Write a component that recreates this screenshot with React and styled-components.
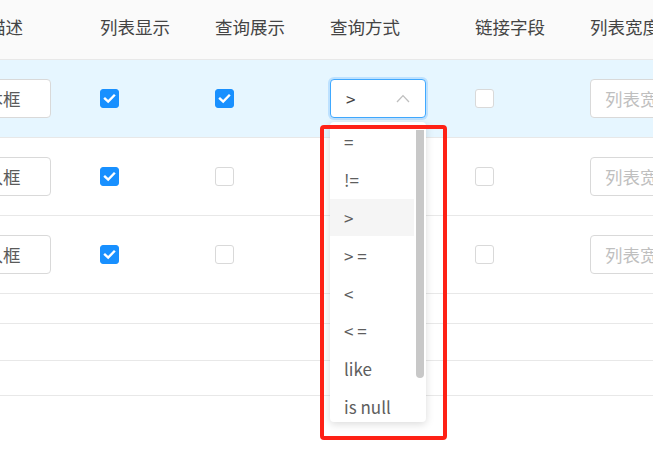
import React from "react";
import styled, { createGlobalStyle } from "styled-components";

const GlobalStyle = createGlobalStyle`
  html, body {
    margin: 0;
    padding: 0;
    background: #fff;
    overflow: hidden;
  }
  * {
    box-sizing: border-box;
  }
`;

const columns = ["字段描述", "列表显示", "查询展示", "查询方式", "链接字段", "列表宽度"];

const rows = [
  { desc: "文本框", list: true, query: true, selected: true, open: true },
  { desc: "输入框", list: true, query: false },
  { desc: "输入框", list: true, query: false },
];

const emptyRows = [30, 37, 35];

const options = ["=", "!=", ">", "> =", "<", "< =", "like", "is null"];

const Check = ({ checked }) => (
  <Box checked={checked}>
    {checked && (
      <svg width="19" height="19" viewBox="0 0 19 19">
        <polyline
          points="5,9.6 8.2,12.6 14,6.6"
          fill="none"
          stroke="#fff"
          strokeWidth="2.4"
          strokeLinecap="square"
        />
      </svg>
    )}
  </Box>
);

const App = () => {
  return (
    <Page>
      <GlobalStyle />
      <Table>
        <HeaderRow>
          {columns.map((c) => (
            <HeadCell key={c}>{c}</HeadCell>
          ))}
        </HeaderRow>
        {rows.map((r, i) => (
          <Row key={i} selected={r.selected} h="78px">
            <Cell>
              <Input>{r.desc}</Input>
            </Cell>
            <Cell>
              <Check checked={r.list} />
            </Cell>
            <Cell>
              <Check checked={r.query} />
            </Cell>
            <Cell>
              {r.open && (
                <SelectWrap>
                  <SelectBox>
                    <span>&gt;</span>
                    <svg width="14" height="9" viewBox="0 0 14 9">
                      <path d="M1 8 L7 1.6 L13 8" fill="none" stroke="#bfbfbf" strokeWidth="1.3" />
                    </svg>
                  </SelectBox>
                  <Dropdown>
                    <OptionList>
                      {options.map((o) => (
                        <Option key={o} active={o === ">"}>
                          {o}
                        </Option>
                      ))}
                    </OptionList>
                    <Track>
                      <Thumb />
                    </Track>
                  </Dropdown>
                </SelectWrap>
              )}
            </Cell>
            <Cell>
              <Check checked={false} />
            </Cell>
            <Cell>
              <Input placeholder>列表宽度</Input>
            </Cell>
          </Row>
        ))}
        {emptyRows.map((h, i) => (
          <Row key={"e" + i} h={h + "px"} />
        ))}
      </Table>
      <Annotation />
    </Page>
  );
};

export default App;

const Page = styled.div`
  position: relative;
  width: 653px;
  height: 450px;
  overflow: hidden;
  font-family: "Noto Sans CJK SC", "Noto Sans", sans-serif;
  font-size: 17.5px;
  color: #606266;
`;

const Table = styled.div`
  margin-left: -47px;
  width: 900px;
`;

const HeaderRow = styled.div`
  display: grid;
  grid-template-columns: 147px 115px 115px 145px 115px 263px;
  align-items: center;
  height: 60px;
  background: #fafafa;
  border-bottom: 1px solid #e8e8e8;
`;

const HeadCell = styled.div`
  color: #444;
  padding-bottom: 6px;
`;

const Row = styled.div`
  display: grid;
  grid-template-columns: 147px 115px 115px 145px 115px 263px;
  align-items: center;
  height: ${({ h }) => h};
  background: ${({ selected }) => (selected ? "#e6f6ff" : "#fff")};
  border-bottom: 1px solid #e8e8e8;
`;

const Cell = styled.div`
  display: flex;
  align-items: center;
`;

const Input = styled.div`
  width: ${({ placeholder }) => (placeholder ? "140px" : "98px")};
  height: 39px;
  display: flex;
  align-items: center;
  padding: 0 14px;
  background: #fff;
  border: 1px solid #d9d9d9;
  border-radius: 4px;
  color: ${({ placeholder }) => (placeholder ? "#bfbfbf" : "#5a5a5a")};
  white-space: nowrap;
`;

const Box = styled.div`
  width: 19px;
  height: 19px;
  border-radius: 3px;
  display: flex;
  background: ${({ checked }) => (checked ? "#1890ff" : "#fff")};
  border: 1px solid ${({ checked }) => (checked ? "#1890ff" : "#d9d9d9")};
  svg {
    margin: -1px;
  }
`;

const SelectWrap = styled.div`
  position: relative;
`;

const SelectBox = styled.div`
  width: 96px;
  height: 39px;
  display: flex;
  align-items: center;
  justify-content: space-between;
  padding: 0 15px 0 15px;
  background: #fff;
  border: 1px solid #40a9ff;
  border-radius: 4px;
  box-shadow: 0 0 0 2px rgba(24, 144, 255, 0.2);
  color: #444;
  font-size: 17px;
  svg {
    margin-top: -1px;
  }
`;

const Dropdown = styled.div`
  position: absolute;
  top: 43px;
  left: 0;
  z-index: 3;
  width: 96px;
  height: 300px;
  display: flex;
  overflow: hidden;
  background: #fff;
  border-radius: 4px;
  box-shadow: 0 2px 8px rgba(0, 0, 0, 0.15);
`;

const OptionList = styled.div`
  flex: 1;
  padding-top: 1px;
`;

const Option = styled.div`
  height: 37.8px;
  display: flex;
  align-items: center;
  padding-left: 14px;
  font-size: 17px;
  color: #5e5e5e;
  white-space: pre;
  background: ${({ active }) => (active ? "#f5f5f5" : "transparent")};
`;

const Track = styled.div`
  width: 12px;
  padding: 8px 2px 0;
`;

const Thumb = styled.div`
  width: 8px;
  height: 248px;
  border-radius: 0 0 4px 4px;
  background: #c8c8c8;
`;

const Annotation = styled.div`
  position: absolute;
  left: 320px;
  top: 125px;
  width: 127px;
  height: 315px;
  border: 4px solid #fe2116;
  border-radius: 4px;
  z-index: 5;
`;
